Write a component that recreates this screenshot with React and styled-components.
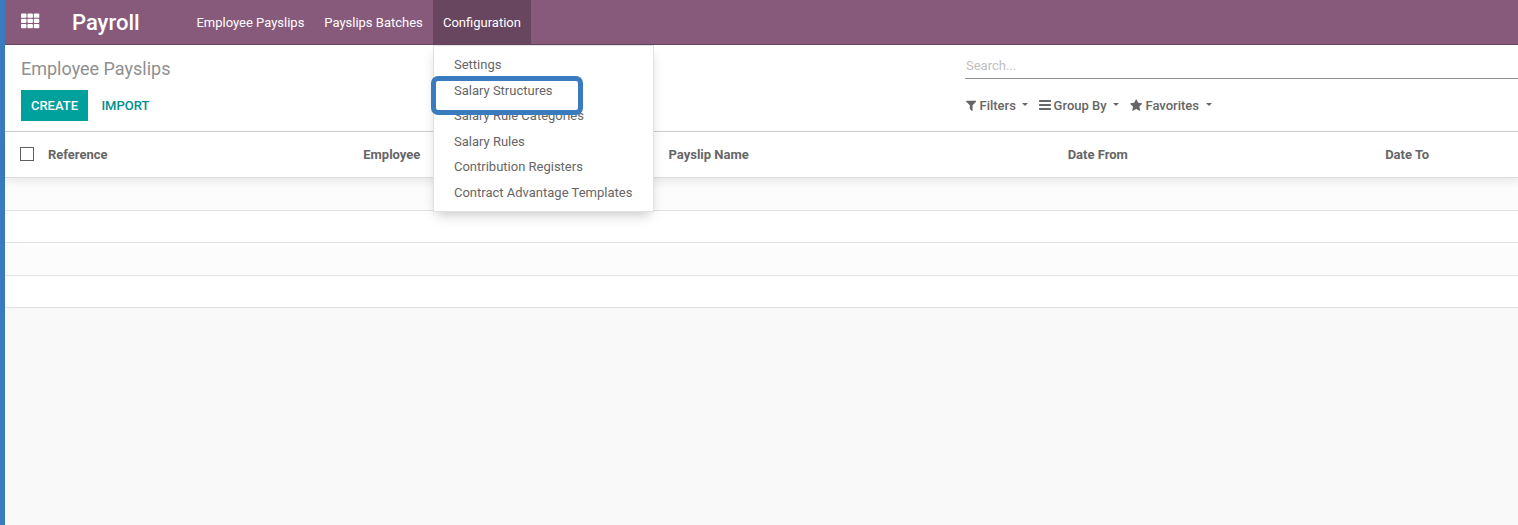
import React from "react";
import styled, { createGlobalStyle } from "styled-components";

const Global = createGlobalStyle`
  * { box-sizing: border-box; }
  html, body { margin: 0; height: 100%; overflow: hidden; }
  body { font: 400 13px/19.5px Roboto, "Liberation Sans", sans-serif; color: #666; background: #f9f9f9; }
`;

const Page = styled.div`
  height: 525px;
  border-left: 5px solid #3a7abf;
  background: #f9f9f9;
`;

const Navbar = styled.header`
  height: 45px;
  display: flex;
  background: #875a7b;
  border-bottom: 1px solid #68465f;
  color: #fff;
`;

const AppsButton = styled.div`
  width: 67px;
  padding: 13px 0 0 16px;
  svg { display: block; }
`;

const Brand = styled.div`
  width: 114.4px;
  font-size: 22px;
  font-weight: 500;
  line-height: 46px;
`;

const NavItem = styled.div`
  position: relative;
  padding: 0 10px;
  line-height: 45px;
  height: 44px;
  width: ${(p) => p.$width}px;
  white-space: nowrap;
  background: ${(p) => (p.$active ? "#68465f" : "transparent")};
`;

const Menu = styled.div`
  position: absolute;
  z-index: 2;
  top: 45px;
  left: 0;
  width: 221px;
  height: 167px;
  padding: 6px 0;
  background: #fff;
  border: 1px solid #dee2e6;
  box-shadow: 0 6px 12px -4px rgba(0, 0, 0, 0.25);
`;

const MenuItem = styled.div`
  height: 25.5px;
  padding: 3px 20px;
  line-height: 19.5px;
  color: #666;
`;

const Highlight = styled.div`
  position: absolute;
  top: 30px;
  left: -2.6px;
  width: 151.4px;
  height: 39px;
  border: 5px solid #3a7abf;
  border-radius: 7px;
`;

const ControlPanel = styled.section`
  height: 87px;
  display: flex;
  justify-content: space-between;
  padding-left: 16px;
  background: #fff;
  border-bottom: 1px solid #cccccc;
`;

const Title = styled.h1`
  margin: 11px 0 8px;
  font-size: 18px;
  font-weight: 400;
  line-height: 26px;
  color: #8f8f8f;
`;

const Actions = styled.div`
  display: flex;
`;

const Button = styled.button`
  height: 31px;
  padding: 0 ${(p) => (p.$primary ? 0 : 13.4)}px;
  width: ${(p) => (p.$primary ? "67px" : "auto")};
  border: 0;
  font: 500 13px/31px Roboto, sans-serif;
  background: ${(p) => (p.$primary ? "#00a09d" : "transparent")};
  color: ${(p) => (p.$primary ? "#fff" : "#008f8c")};
`;

const SearchArea = styled.div`
  width: 553px;
`;

const SearchBox = styled.div`
  height: 34px;
  padding: 11px 0 0 1px;
  border-bottom: 1px solid #8f8f8f;
  color: #c0c0c0;
`;

const FilterBar = styled.div`
  display: flex;
  padding: 17px 0 0 1px;
  font-weight: 500;
`;

const FilterButton = styled.div`
  width: ${(p) => p.$width}px;
  display: flex;
  align-items: center;
  svg { margin-right: ${(p) => p.$gap}px; flex: none; }
`;

const Caret = styled.i`
  margin: -2px 0 0 ${(p) => p.$gap}px;
  border: 3px solid transparent;
  border-top-color: #666;
  border-bottom: 0;
`;

const TableHead = styled.div`
  position: relative;
  height: 46px;
  display: flex;
  align-items: center;
  padding-left: 15px;
  background: #fff;
  border-bottom: 1px solid #dcdcdc;
  box-shadow: 0 4px 8px rgba(0, 0, 0, 0.08);
  font-weight: 700;
`;

const Checkbox = styled.span`
  width: 14px;
  height: 14px;
  margin: 0 14px 2px 0;
  border: 1px solid #5f5f5f;
`;

const HeadCell = styled.div`
  width: ${(p) => p.$width}px;
  flex: none;
`;

const Row = styled.div`
  height: ${(p) => p.$height}px;
  background: ${(p) => (p.$odd ? "#fcfcfc" : "#fff")};
  border-bottom: 1px solid #dee2e6;
`;

const ThIcon = () => (
  <svg width="19" height="16" viewBox="0 0 19 16" fill="#fff">
    {[0.6, 5.8, 11].map((y) =>
      [0, 6.4, 12.8].map((x) => <rect key={`${x}-${y}`} x={x} y={y} width="5.5" height="4.2" rx="0.9" />)
    )}
  </svg>
);

const FaIcon = ({ d, width, box }) => (
  <svg width={width} height="13" viewBox={box} fill="#666"><path d={d} /></svg>
);

const FilterIcon = () => (
  <FaIcon width={10.4} box="192 0 1408 1792" d="M1595 295q17 41-14 70l-493 493v742q0 42-39 59-13 5-25 5-27 0-45-19l-256-256q-19-19-19-45v-486l-493-493q-31-29-14-70 17-39 59-39h1280q42 0 59 39z" />
);

const GroupIcon = () => (
  <svg width="12" height="13" viewBox="0 0 12 13" fill="#666">
    {[1, 5, 9].map((y) => <rect key={y} y={y} width="12" height="2" rx="0.4" />)}
  </svg>
);

const StarIcon = () => (
  <FaIcon width={12.4} box="64 0 1664 1792" d="M1728 647q0 22-26 48l-363 354 86 500q1 7 1 20 0 21-10.500 35.500t-30.500 14.500q-19 0-40-12l-449-236-449 236q-22 12-40 12-21 0-31.500-14.500t-10.500-35.500q0-6 2-20l86-500-364-354q-25-27-25-48 0-37 56-46l502-73 225-455q19-41 49-41t49 41l225 455 502 73q56 9 56 46z" />
);

const menuItems = ["Settings", "Salary Structures", "Salary Rule Categories", "Salary Rules", "Contribution Registers", "Contract Advantage Templates"];
const columns = [["Reference", 315.3], ["Employee", 305.2], ["Payslip Name", 399.2], ["Date From", 317.5], ["Date To", 100]];
const rowHeights = [33, 32, 33, 32];

export default function App() {
  return (
    <>
      <Global />
      <Page>
        <Navbar>
          <AppsButton><ThIcon /></AppsButton>
          <Brand>Payroll</Brand>
          <NavItem $width={127.9}>Employee Payslips</NavItem>
          <NavItem $width={118.7}>Payslips Batches</NavItem>
          <NavItem $active $width={98}>
            Configuration
            <Menu>
              {menuItems.map((m) => <MenuItem key={m}>{m}</MenuItem>)}
              <Highlight />
            </Menu>
          </NavItem>
        </Navbar>
        <ControlPanel>
          <div>
            <Title>Employee Payslips</Title>
            <Actions>
              <Button $primary>CREATE</Button>
              <Button>IMPORT</Button>
            </Actions>
          </div>
          <SearchArea>
            <SearchBox>Search...</SearchBox>
            <FilterBar>
              <FilterButton $width={73} $gap={3.1}><FilterIcon />Filters<Caret $gap={6} /></FilterButton>
              <FilterButton $width={91} $gap={2.6}><GroupIcon />Group By<Caret $gap={6.4} /></FilterButton>
              <FilterButton $width={90} $gap={3.1}><StarIcon />Favorites<Caret $gap={7.4} /></FilterButton>
            </FilterBar>
          </SearchArea>
        </ControlPanel>
        <TableHead>
          <Checkbox />
          {columns.map(([c, w]) => <HeadCell key={c} $width={w}>{c}</HeadCell>)}
        </TableHead>
        {rowHeights.map((h, i) => <Row key={i} $height={h} $odd={i % 2 === 0} />)}
      </Page>
    </>
  );
}
